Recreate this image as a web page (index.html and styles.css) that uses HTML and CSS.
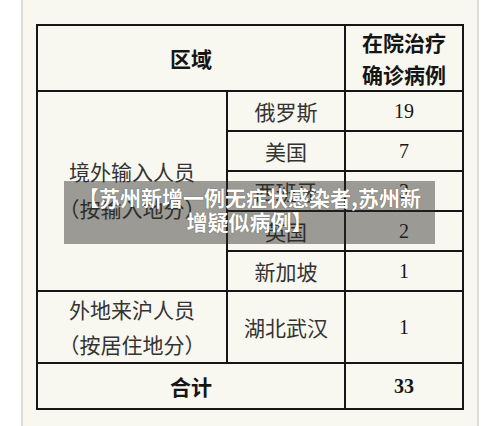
FILE: index.html
```html
<!DOCTYPE html>
<html lang="zh-CN">
<head>
<meta charset="utf-8">
<title>苏州新增一例无症状感染者</title>
<link rel="stylesheet" href="styles.css">
</head>
<body>
<div class="page">
  <table class="cases">
    <colgroup>
      <col class="c-region">
      <col class="c-country">
      <col class="c-num">
    </colgroup>
    <tr class="r-head">
      <th colspan="2">区域</th>
      <th class="two">在院治疗<br>确诊病例</th>
    </tr>
    <tr class="r-row">
      <td rowspan="5" class="group abroad">境外输入人员<br>（按输入地分）</td>
      <td>俄罗斯</td>
      <td class="num">19</td>
    </tr>
    <tr class="r-row"><td>美国</td><td class="num">7</td></tr>
    <tr class="r-row"><td>西班牙</td><td class="num">3</td></tr>
    <tr class="r-row"><td>英国</td><td class="num">2</td></tr>
    <tr class="r-row"><td>新加坡</td><td class="num">1</td></tr>
    <tr class="r-local">
      <td class="group">外地来沪人员<br>（按居住地分）</td>
      <td>湖北武汉</td>
      <td class="num">1</td>
    </tr>
    <tr class="r-total">
      <th colspan="2">合计</th>
      <td class="num total">33</td>
    </tr>
  </table>
  <div class="caption">【苏州新增一例无症状感染者,苏州新<br>增疑似病例】</div>
</div>
</body>
</html>
```
FILE: styles.css
```css
html, body {
  margin: 0;
  padding: 0;
  background: #ffffff;
}
body {
  width: 500px;
  height: 426px;
  overflow: hidden;
  font-family: "Noto Sans CJK SC", "Noto Sans", sans-serif;
}
.page {
  position: relative;
  box-sizing: border-box;
  margin-left: 21px;
  width: 458px;
  height: 426px;
  border-left: 2px solid #dcdcd9;
  border-right: 2px solid #dcdcd9;
  background: #f9f8f0;
  padding: 24px 0 0 13px;
}
.cases {
  border-collapse: collapse;
  table-layout: fixed;
  width: 428px;
  border: 2px solid #161616;
}
.c-region { width: 190px; }
.c-country { width: 118px; }
.c-num { width: 118px; }
.cases th,
.cases td {
  border: 2px solid #161616;
  padding: 0;
  text-align: center;
  vertical-align: middle;
  font-size: 21px;
  line-height: 24px;
}
.cases th {
  font-weight: bold;
  color: #151515;
}
.cases td {
  color: #333333;
  font-weight: normal;
}
.r-head { height: 66px; }
.cases .r-head .two { line-height: 32px; }
.r-row { height: 40px; }
.r-local { height: 67px; }
.r-total { height: 46px; }
.cases td.group { line-height: 35px; }
.cases td.abroad { line-height: 37px; padding-bottom: 3px; }
.cases td.num {
  font-family: "Liberation Serif", "Times New Roman", serif;
  font-size: 20px;
  color: #151515;
}
.cases td.total { font-weight: bold; }
.caption {
  position: absolute;
  left: 41px;
  top: 181px;
  width: 371px;
  height: 63px;
  box-sizing: border-box;
  padding-top: 4px;
  background: rgba(40, 40, 35, 0.45);
  color: #ffffff;
  font-weight: bold;
  font-size: 21px;
  line-height: 24px;
  text-align: center;
  white-space: nowrap;
  text-shadow: 0 0 1px rgba(0, 0, 0, 0.6);
}
```
